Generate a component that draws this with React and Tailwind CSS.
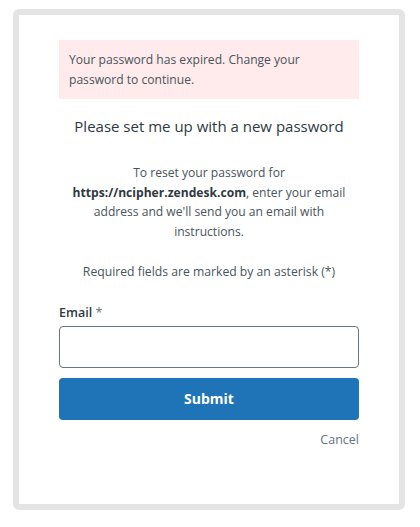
export default function App() {
  return (
    <div className="min-h-[527px] bg-white pt-[9px] pl-[13px]" style={{ fontFamily: '"Open Sans", "Noto Sans", sans-serif' }}>
      <div className="w-[392px] h-[501px] border-[6px] border-[#e4e4e4] rounded-[6px] bg-white flex flex-col items-center pt-[25px] px-[40px]">
        <div className="w-[300px] bg-[#ffebeb] px-[10px] pt-[10px] pb-[9px] text-[12.1px] leading-[20px] text-[#49545c]">
          Your password has expired. Change your password to continue.
        </div>
        <h2 className="mt-[16px] text-[15px] leading-[22px] text-[#2f3941]">Please set me up with a new password</h2>
        <p className="mt-[26px] w-[300px] text-center text-[12.1px] leading-[19.7px] text-[#49545c]">
          To reset your password for <b className="font-bold text-[#2f3941]">https://ncipher.zendesk.com</b>, enter your email address and we'll send you an email with instructions.
        </p>
        <p className="mt-[20px] text-center text-[12.2px] leading-[20px] text-[#49545c]">Required fields are marked by an asterisk (*)</p>
        <div className="w-[300px] mt-[21px]">
          <label className="block text-[12.5px] leading-[20px] font-semibold text-[#2f3941]">
            Email <span className="font-normal text-[#68737d]">*</span>
          </label>
          <input type="email" className="mt-[3px] block w-full h-[42px] border border-[#68737d] rounded-[4px] bg-white outline-none" />
          <button className="mt-[10px] w-full h-[42px] rounded-[4px] bg-[#1f73b7] text-white text-[14px] font-bold">Submit</button>
          <div className="mt-[10px] text-right text-[12.5px] leading-[20px] text-[#68737d]">Cancel</div>
        </div>
      </div>
    </div>
  )
}
